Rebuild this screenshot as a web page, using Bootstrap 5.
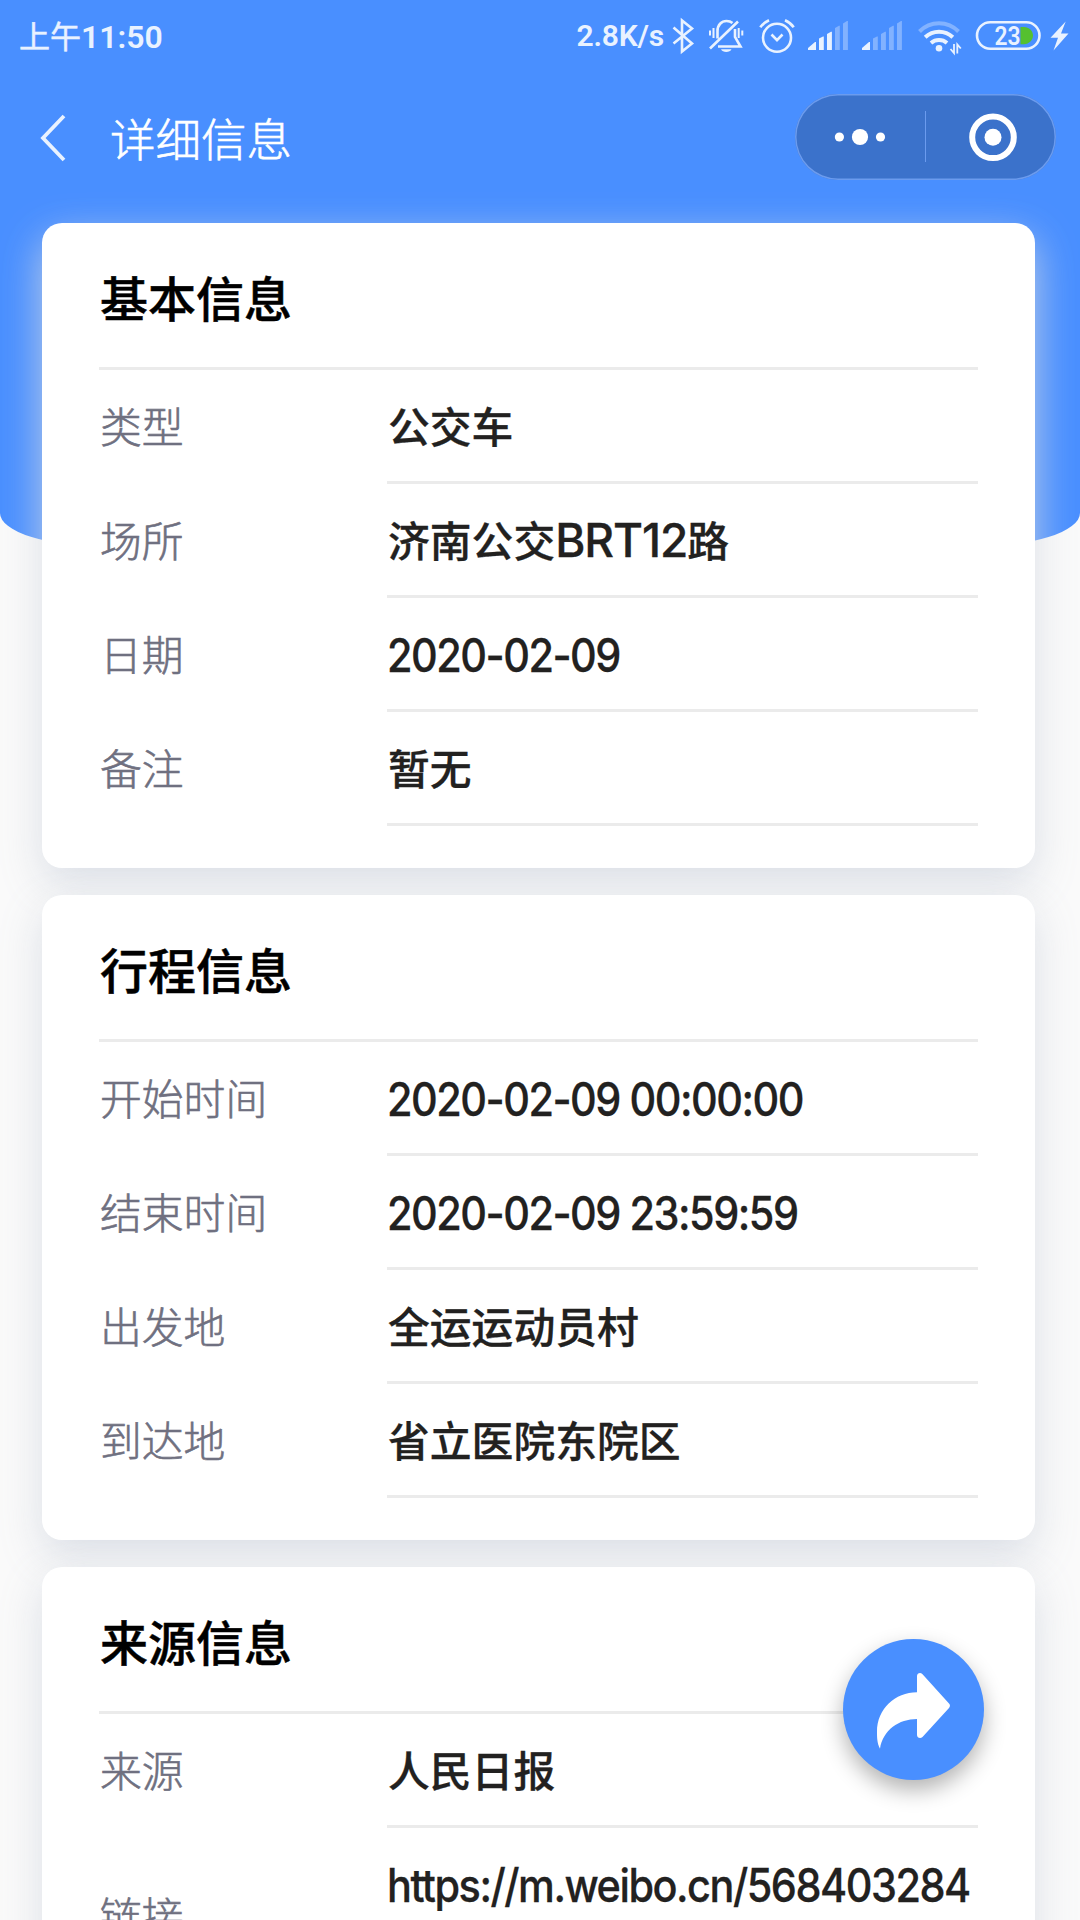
<!DOCTYPE html>
<html lang="zh-CN">
<head>
<meta charset="utf-8">
<meta name="viewport" content="width=device-width, initial-scale=1">
<title>详细信息</title>
<link href="https://cdn.jsdelivr.net/npm/bootstrap@5.3.0/dist/css/bootstrap.min.css" rel="stylesheet">
<style>
html,body{height:1920px;overflow:hidden}
body{background:#fafafa;font-family:"Noto Sans CJK SC",sans-serif;color:#222120}
.screen{width:1080px;height:1920px}
.hero{height:547px;background:#498fff;border-radius:0 0 108px 108px / 0 0 34px 34px;z-index:0}
.statusbar{height:72px;padding:0 8px 0 19px;color:#e9f2ff;font-family:Roboto,"Noto Sans CJK SC",sans-serif;font-size:32px;font-weight:600;line-height:70px}
.statusbar .cjk{font-size:31px;font-weight:400;font-family:"Noto Sans CJK SC",sans-serif;-webkit-text-stroke:.5px #e9f2ff}
.statusbar .rate{font-size:30px;letter-spacing:-.2px;line-height:72px;margin-right:1px}
.titlebar{height:130px;padding:0 24px 0 39px;color:#fff}
.page-title{font-size:45.5px;font-weight:300;line-height:60px;margin-left:43px;-webkit-text-stroke:.6px #fff}
.capsule{width:261px;height:86px;border-radius:43px;background:#3b72cb;box-shadow:inset 0 0 0 1.5px #6b9bee}
.stack{margin-top:21px;padding:0 45px 0 42px;gap:27px}
.panel{border-radius:20px;background:#fff;height:645px;padding:0 57px;box-shadow:0 15px 42px rgba(214,218,227,.85)}
.panel h2{height:147px;font-size:48px;font-weight:500;color:#000;line-height:146px;border-bottom:3px solid #ebebeb;margin:0;padding-left:1px;-webkit-text-stroke:.5px #000}
.item{height:114px;font-size:41.8px}
.item .key{width:288px;color:#6f7080;font-weight:300;line-height:110px;padding-left:1px;-webkit-text-stroke:.6px #6f7080}
.item .val{border-bottom:3px solid #ebebeb;font-weight:500;line-height:110px;white-space:nowrap;min-width:0;padding-left:1px;-webkit-text-stroke:.3px #222120}
.lat{font-family:Inter,sans-serif;font-size:46px;letter-spacing:-1.65px;font-weight:500;display:inline-block;line-height:1;transform:scaleX(.9);transform-origin:0 50%;margin-left:-1px;position:relative;top:1px}
.bus{font-family:Inter,sans-serif;font-size:46px;letter-spacing:-1.1px;line-height:1;font-weight:500}
.item.tall{height:178px}
.item.tall .key{line-height:174px}
.fab{right:96px;top:1639px;width:141px;height:141px;background:#498fff;box-shadow:0 10px 22px rgba(0,0,0,.3);z-index:3}
</style>
</head>
<body>
<div class="screen position-relative overflow-hidden">
  <div class="hero position-absolute top-0 start-0 w-100"></div>
  <div class="position-relative">
    <div class="statusbar d-flex justify-content-between">
      <div><span class="cjk">上午</span>11:50</div>
      <div class="d-flex align-items-center"><span class="rate">2.8K/s</span>
      <svg class="flex-shrink-0" width="407" height="72" viewBox="665 0 407 72" fill="none" stroke="#e9f2ff" stroke-width="2.6">
        <!-- bluetooth -->
        <path d="M673.5 27.5L692 43.5l-10 8v-31l10 8-18.500 15"/>
        <!-- muted bell -->
        <path d="M710 48.500L738 21.500M717.500 38.500V31c0-6 4-10 9-10 2.500 0 4.500.700 6 2M735 29v8l5.500 9.500H718"/>
        <path d="M710 30.500v5M713.500 28v10M738.700 28v10M742.300 30.500v5" stroke-width="2"/>
        <path d="M721 49.200h10.500c-1.500 3.700-9 3.700-10.500 0z" fill="#e9f2ff" stroke="none"/>
        <!-- alarm -->
        <circle cx="777" cy="37.700" r="14"/><path d="M771.500 34.500l5.500 5.700 5.500-5.700M760.300 27.300c2-3 5-5.300 8.700-7M785 20.300c3.700 1.700 6.700 4 8.700 7"/>
        <g stroke="none" fill="#e9f2ff">
          <path d="M808 48l7-6h1v8h-8zM819 38.500l4-2h.800V50H819zM827 34l4-2.300h.900V50H827z"/>
          <path fill="#82b2ff" d="M835 28l4-2.300h.800V50H835zM843 23.500l4-2.500h.900V50H843z"/>
          <path d="M862 48l7-6h1v8h-8z"/>
          <path fill="#82b2ff" d="M873 38.500l4-2h.800V50H873zM881 34l4-2.300h.900V50H881zM889 28l4-2.300h.800V50H889zM897 23.500l4-2.500h.900V50H897z"/>
        </g>
        <!-- wifi -->
        <path d="M919.500 31.500a27 27 0 0 1 39 0" stroke="#82b2ff" stroke-width="4"/>
        <path d="M925.200 37.300a20 20 0 0 1 27.600 0M931 43a12.500 12.500 0 0 1 16 0" stroke-width="4"/>
        <circle cx="939" cy="48.300" r="3.300" fill="#e9f2ff" stroke="none"/>
        <path d="M954 44v9l-3.500-4M957.300 53.500v-9l3.500 4" stroke-width="1.800"/>
        <!-- battery -->
        <rect x="977" y="22.300" width="62.500" height="26.400" rx="13.200"/>
        <path d="M1020.500 27h3.500c5 0 9 4 9 8.600s-4 8.600-9 8.600h-3.500z" fill="#55c02f" stroke="none"/>
        <text x="994.500" y="44.600" font-family="Roboto,sans-serif" font-size="25" font-weight="600" textLength="26" lengthAdjust="spacingAndGlyphs" fill="#e9f2ff" stroke="none">23</text>
        <path d="M1065.700 21.500l-15.200 16.200h7.500l-4.500 12.800 15-17H1061z" fill="#e9f2ff" stroke="none"/>
      </svg></div>
    </div>
    <div class="titlebar d-flex align-items-center">
      <svg width="28" height="50" viewBox="0 0 28 50" fill="none" stroke="#e9f2ff" stroke-width="3.8"><path d="M25 4L4 26l21 22"/></svg>
      <div class="page-title">详细信息</div>
      <div class="capsule ms-auto">
        <svg class="d-block" width="261" height="86" viewBox="795 94 261 86" fill="#fff">
          <circle cx="839.400" cy="137" r="4.600"/><circle cx="860" cy="137" r="8.100"/><circle cx="880.500" cy="137" r="4.600"/>
          <path d="M925 111h1v51h-1z" fill="#6b9bee"/>
          <circle cx="993" cy="137.300" r="20.800" fill="none" stroke="#fff" stroke-width="6"/><circle cx="993" cy="137.300" r="8.500"/>
        </svg>
      </div>
    </div>
    <main class="stack d-flex flex-column">
      <section class="panel"><h2>基本信息</h2>
        <div class="item d-flex"><div class="key flex-shrink-0">类型</div><div class="val flex-fill">公交车</div></div>
        <div class="item d-flex"><div class="key flex-shrink-0">场所</div><div class="val flex-fill">济南公交<span class="bus">BRT12</span>路</div></div>
        <div class="item d-flex"><div class="key flex-shrink-0">日期</div><div class="val flex-fill"><span class="lat">2020-02-09</span></div></div>
        <div class="item d-flex"><div class="key flex-shrink-0">备注</div><div class="val flex-fill">暂无</div></div>
      </section>
      <section class="panel"><h2>行程信息</h2>
        <div class="item d-flex"><div class="key flex-shrink-0">开始时间</div><div class="val flex-fill"><span class="lat">2020-02-09 00:00:00</span></div></div>
        <div class="item d-flex"><div class="key flex-shrink-0">结束时间</div><div class="val flex-fill"><span class="lat">2020-02-09 23:59:59</span></div></div>
        <div class="item d-flex"><div class="key flex-shrink-0">出发地</div><div class="val flex-fill">全运运动员村</div></div>
        <div class="item d-flex"><div class="key flex-shrink-0">到达地</div><div class="val flex-fill">省立医院东院区</div></div>
      </section>
      <section class="panel"><h2>来源信息</h2>
        <div class="item d-flex"><div class="key flex-shrink-0">来源</div><div class="val flex-fill">人民日报</div></div>
        <div class="item tall d-flex"><div class="key flex-shrink-0">链接</div><div class="val flex-fill"><span class="lat">https://m.weibo.cn/568403284</span></div></div>
      </section>
    </main>
  </div>
  <button class="fab btn rounded-circle position-absolute border-0 p-0" aria-label="分享">
    <svg class="d-block" width="141" height="141" viewBox="0 0 141 141" fill="#fff"><path d="M74 53.300V37c0-3 3.500-4 5.300-2L106 64.500c1.300 1.400 1.300 3 0 4.400L79.500 98c-2 2-5.500 1-5.500-2V80C56 80 40 91 37 109.700 34 104 34 98 34 92.700 34 70 52 53.300 74 53.300Z"/></svg>
  </button>
</div>
<script src="https://cdn.jsdelivr.net/npm/bootstrap@5.3.0/dist/js/bootstrap.bundle.min.js"></script>
</body>
</html>
